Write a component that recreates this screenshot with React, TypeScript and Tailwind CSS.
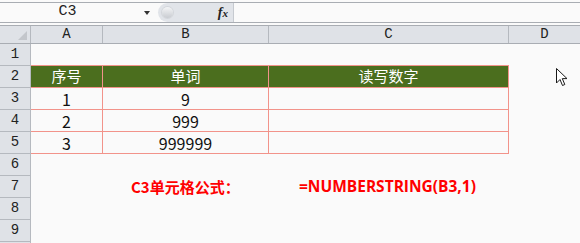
const rows = [1, 2, 3, 4, 5, 6, 7, 8, 9];

const mono = "font-['Liberation_Mono','DejaVu_Sans_Mono',monospace]";
const cjk = "font-['Noto_Sans_CJK_SC','Noto_Sans',sans-serif]";

function Cursor() {
  return (
    <svg width="14" height="20" viewBox="0 0 14 20" className="absolute left-[555px] top-[67px]">
      <path
        d="M1.5 1.5 L1.5 16 L5 12.5 L7.5 18.5 L9.8 17.5 L7.3 11.6 L12 11.6 Z"
        fill="#ffffff"
        stroke="#1a1a1a"
        strokeWidth="1"
        strokeLinejoin="miter"
      />
    </svg>
  );
}

function FormulaBar() {
  return (
    <div className="flex h-[19px] items-stretch">
      {/* name box */}
      <div className="flex w-[158px] items-center">
        <span className={`w-[135px] text-center text-[15px] text-[#222] ${mono}`}>C3</span>
        <span className="ml-[9px] h-0 w-0 border-x-[3.5px] border-t-[4px] border-x-transparent border-t-[#333]" />
      </div>
      {/* pill with fx */}
      <div className="flex w-[76px] items-center rounded-l-full border-r border-[#c6cad0] bg-[#e1e4e9]">
        <span className="ml-[4px] h-[11px] w-[11px] rounded-full bg-gradient-to-b from-[#f4f5f7] to-[#c9ccd1] shadow-[0_0_0_1px_#d3d6db]" />
        <span className="ml-auto mr-[5px] font-['Liberation_Serif',serif] text-[14px] font-bold italic leading-none text-[#222]">
          f<span className="text-[11px]">x</span>
        </span>
      </div>
      <div className="flex-1 bg-[#fafafa]" />
    </div>
  );
}

export default function App() {
  const tableBorder = "border-[#f2938a]";
  const data: Record<number, [string, string]> = {
    2: ["序号", "单词"],
    3: ["1", "9"],
    4: ["2", "999"],
    5: ["3", "999999"],
  };
  return (
    <div className="relative h-[243px] w-[580px] overflow-hidden bg-[#fafafa]">
      <div className="h-[2px]" />
      <div className="border-y border-[#a9adb3]">
        <FormulaBar />
      </div>
      <div className="h-[2px]" />

      {/* column headers */}
      <div className="flex h-[19px] border-y border-[#a9adb3] bg-[#dfe2e7] text-[14px] text-[#222]">
        <div className="relative w-[31px] border-r border-[#b5b9bf]">
          <span className="absolute bottom-[3px] right-[3px] h-0 w-0 border-b-[9px] border-l-[9px] border-b-[#c3c6cb] border-l-transparent" />
        </div>
        <div className={`flex w-[72px] items-center justify-center border-r border-[#b5b9bf] ${mono}`}>A</div>
        <div className={`flex w-[166px] items-center justify-center border-r border-[#b5b9bf] ${mono}`}>B</div>
        <div className={`flex w-[240px] items-center justify-center border-r border-[#b5b9bf] ${mono}`}>C</div>
        <div className={`flex flex-1 items-center justify-center ${mono}`}>D</div>
      </div>

      {/* sheet rows */}
      {rows.map((r) => {
        const isHead = r === 2;
        const inTable = r >= 2 && r <= 5;
        const above = r === 1;
        const cell = (w: string, text?: string) => (
          <div
            className={`flex ${w} items-center justify-center ${
              inTable ? `border-r ${tableBorder}` : ""
            } ${isHead ? "bg-[#4b6e1e] text-[15px] text-white" : "text-[16px] text-[#111]"} ${cjk}`}
          >
            {text}
          </div>
        );
        return (
          <div key={r} className="flex h-[22px]">
            <div
              className={`flex w-[31px] items-center justify-center border-r border-b border-[#b5b9bf] bg-[#dfe2e7] text-[14px] text-[#222] ${mono}`}
            >
              {r}
            </div>
            {inTable || above ? (
              <div className={`flex w-[478px] border-b ${tableBorder}`}>
                {inTable ? (
                  <>
                    {cell("w-[72px]", data[r][0])}
                    {cell("w-[166px]", data[r][1])}
                    {cell("w-[240px]", isHead ? "读写数字" : "")}
                  </>
                ) : null}
              </div>
            ) : r === 7 ? (
              <div className="flex items-center text-[15px] font-bold text-[#ff0000]">
                <span className={`ml-[100px] w-[168px] ${cjk}`}>C3单元格公式：</span>
                <span className="font-['Open_Sans','Noto_Sans',sans-serif] text-[15.5px]">=NUMBERSTRING(B3,1)</span>
              </div>
            ) : null}
          </div>
        );
      })}
      {/* row header strip below the last visible row */}
      <div className="h-[10px] w-[31px] border-r border-[#b5b9bf] bg-[#dfe2e7]" />

      <Cursor />
    </div>
  );
}
